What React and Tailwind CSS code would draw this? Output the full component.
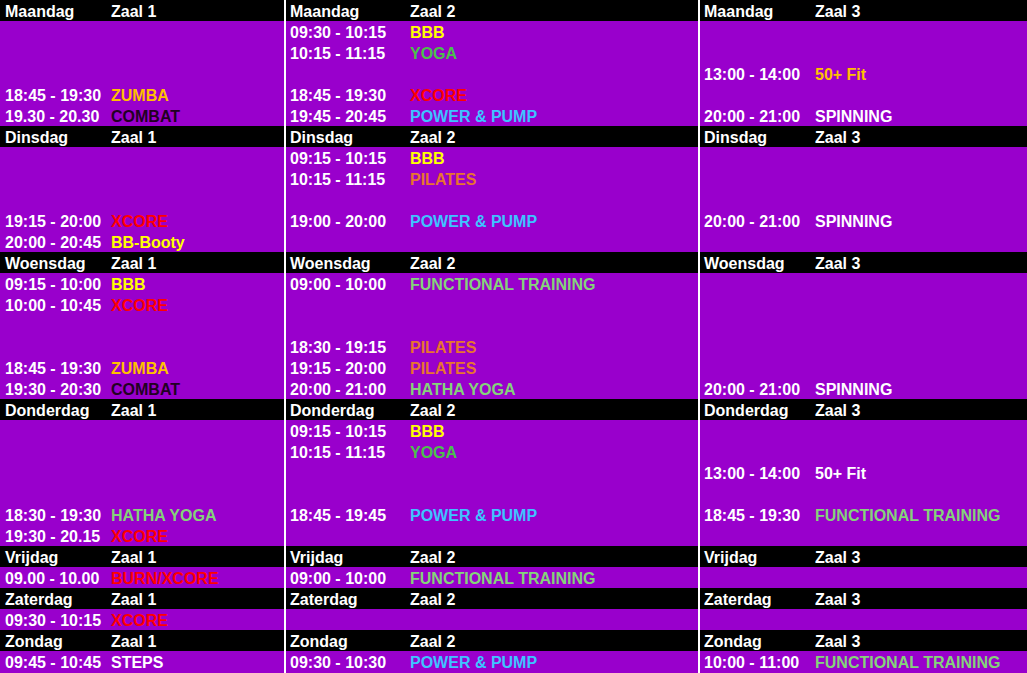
import React from "react";

// kleuren per les
const C = {
  zumba: "text-[#ffc000]",
  combat: "text-[#220022]",
  bbb: "text-[#ffff00]",
  yoga: "text-[#4cc04c]",
  xcore: "text-[#ff0000]",
  pump: "text-[#3ec3ff]",
  fit: "text-[#ffc000]",
  white: "text-white",
  pilates: "text-[#e8742f]",
  func: "text-[#85d37a]",
};

const days = [
  {
    name: "Maandag",
    rows: 5,
    zalen: [
      { 4: ["18:45 - 19:30", "ZUMBA", C.zumba], 5: ["19.30 - 20.30", "COMBAT", C.combat] },
      {
        1: ["09:30 - 10:15", "BBB", C.bbb],
        2: ["10:15 - 11:15", "YOGA", C.yoga],
        4: ["18:45 - 19:30", "XCORE", C.xcore],
        5: ["19:45 - 20:45", "POWER & PUMP", C.pump],
      },
      { 3: ["13:00 - 14:00", "50+ Fit", C.fit], 5: ["20:00 - 21:00", "SPINNING", C.white] },
    ],
  },
  {
    name: "Dinsdag",
    rows: 5,
    zalen: [
      { 4: ["19:15 - 20:00", "XCORE", C.xcore], 5: ["20:00 - 20:45", "BB-Booty", C.bbb] },
      {
        1: ["09:15 - 10:15", "BBB", C.bbb],
        2: ["10:15 - 11:15", "PILATES", C.pilates],
        4: ["19:00 - 20:00", "POWER & PUMP", C.pump],
      },
      { 4: ["20:00 - 21:00", "SPINNING", C.white] },
    ],
  },
  {
    name: "Woensdag",
    rows: 6,
    zalen: [
      {
        1: ["09:15 - 10:00", "BBB", C.bbb],
        2: ["10:00 - 10:45", "XCORE", C.xcore],
        5: ["18:45 - 19:30", "ZUMBA", C.zumba],
        6: ["19:30 - 20:30", "COMBAT", C.combat],
      },
      {
        1: ["09:00 - 10:00", "FUNCTIONAL TRAINING", C.func],
        4: ["18:30 - 19:15", "PILATES", C.pilates],
        5: ["19:15 - 20:00", "PILATES", C.pilates],
        6: ["20:00 - 21:00", "HATHA YOGA", C.func],
      },
      { 6: ["20:00 - 21:00", "SPINNING", C.white] },
    ],
  },
  {
    name: "Donderdag",
    rows: 6,
    zalen: [
      { 5: ["18:30 - 19:30", "HATHA YOGA", C.func], 6: ["19:30 - 20.15", "XCORE", C.xcore] },
      {
        1: ["09:15 - 10:15", "BBB", C.bbb],
        2: ["10:15 - 11:15", "YOGA", C.yoga],
        5: ["18:45 - 19:45", "POWER & PUMP", C.pump],
      },
      { 3: ["13:00 - 14:00", "50+ Fit", C.white], 5: ["18:45 - 19:30", "FUNCTIONAL TRAINING", C.func] },
    ],
  },
  {
    name: "Vrijdag",
    rows: 1,
    zalen: [
      { 1: ["09.00 - 10.00", "BURN/XCORE", C.xcore] },
      { 1: ["09:00 - 10:00", "FUNCTIONAL TRAINING", C.func] },
      {},
    ],
  },
  {
    name: "Zaterdag",
    rows: 1,
    zalen: [{ 1: ["09:30 - 10:15", "XCORE", C.xcore] }, {}, {}],
  },
  {
    name: "Zondag",
    rows: 1,
    zalen: [
      { 1: ["09:45 - 10:45", "STEPS", C.white] },
      { 1: ["09:30 - 10:30", "POWER & PUMP", C.pump] },
      { 1: ["10:00 - 11:00", "FUNCTIONAL TRAINING", C.func] },
    ],
  },
];

const cols = [
  { first: "w-[111px] pl-[5px]" },
  { first: "w-[124px] pl-[4px]" },
  { first: "w-[115px] pl-[4px]" },
];

function Row({ left, right, color, dark, first }) {
  return (
    <div className={`flex h-[21px] shrink-0 items-start overflow-hidden whitespace-nowrap pt-[2px] ${dark ? "bg-black" : ""}`}>
      <span className={`${first} shrink-0 text-white`}>{left}</span>
      <span className={color}>{right}</span>
    </div>
  );
}

export default function App() {
  return (
    <div className="grid h-[673px] w-[1027px] grid-cols-[284px_412px_327px] gap-x-[2px] overflow-hidden bg-white font-['Liberation_Sans',Arial,sans-serif] text-[16px] font-bold leading-[19px]">
      {cols.map((col, ci) => (
        <div key={ci} className="flex flex-col bg-[#9900cc]">
          {days.map((day) => (
            <React.Fragment key={day.name}>
              <Row dark left={day.name} right={`Zaal ${ci + 1}`} color="text-white" first={col.first} />
              {Array.from({ length: day.rows }, (_, i) => {
                const item = day.zalen[ci][i + 1];
                return (
                  <Row
                    key={i}
                    left={item ? item[0] : ""}
                    right={item ? item[1] : ""}
                    color={item ? item[2] : ""}
                    first={col.first}
                  />
                );
              })}
            </React.Fragment>
          ))}
        </div>
      ))}
    </div>
  );
}
